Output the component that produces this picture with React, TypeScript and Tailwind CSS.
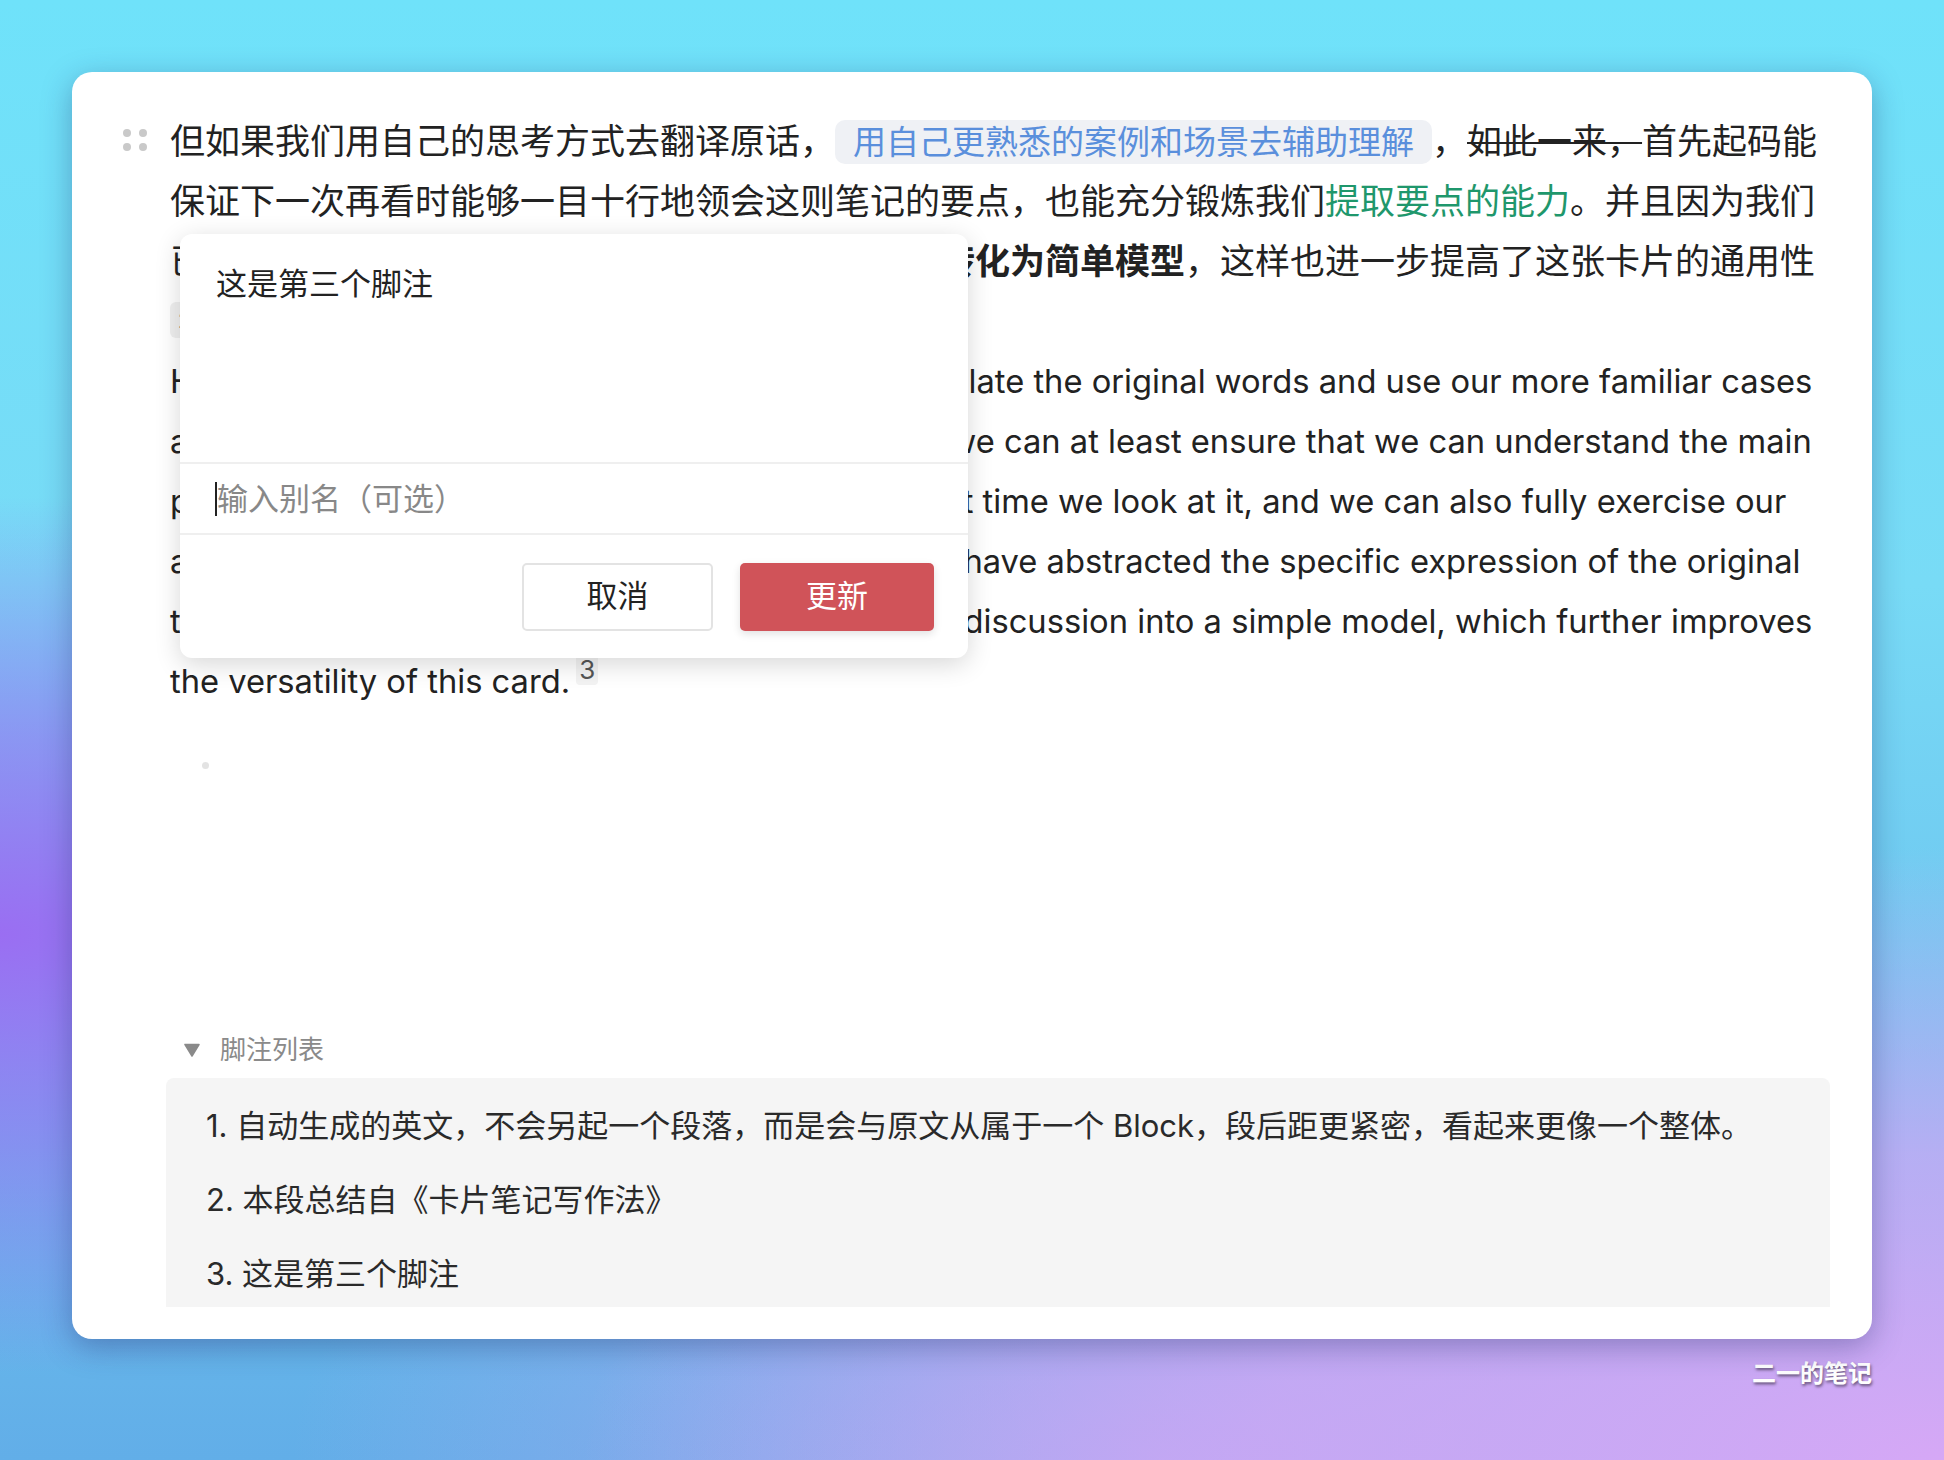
import React from "react";

function DragHandle() {
  return (
    <div className="absolute left-[51px] top-[57px] grid grid-cols-2 gap-x-[8px] gap-y-[6px]">
      <span className="block w-[8px] h-[8px] rounded-full bg-[#c9c9c9]" />
      <span className="block w-[8px] h-[8px] rounded-full bg-[#c9c9c9]" />
      <span className="block w-[8px] h-[8px] rounded-full bg-[#c9c9c9]" />
      <span className="block w-[8px] h-[8px] rounded-full bg-[#c9c9c9]" />
    </div>
  );
}

function FootnoteDialog() {
  return (
    <div className="absolute left-[108px] top-[162px] z-10 flex h-[424px] w-[788px] flex-col overflow-hidden rounded-[12px] bg-white shadow-[0_6px_26px_rgba(0,0,0,0.16)]">
      <div className="h-[228px] px-[36px] pt-[28px] text-[31px] leading-[44px] text-[#222]">这是第三个脚注</div>
      <div className="flex h-[73px] items-center border-y-2 border-[#efefef] pl-[35px]">
        <span className="block h-[34px] w-[2px] bg-[#222]" />
        <span className="text-[31px] leading-[40px] text-[#888888]">输入别名（可选）</span>
      </div>
      <div className="flex flex-1 items-center justify-end gap-[27px] pr-[34px]">
        <button className="h-[68px] w-[191px] rounded-[5px] border-2 border-[#e3e3e3] bg-white text-[31px] text-[#222]">
          取消
        </button>
        <button className="h-[68px] w-[194px] rounded-[5px] bg-[#d05359] text-[31px] text-white shadow-[0_3px_8px_rgba(0,0,0,0.12)]">
          更新
        </button>
      </div>
    </div>
  );
}

const footnotes = [
  "自动生成的英文，不会另起一个段落，而是会与原文从属于一个 Block，段后距更紧密，看起来更像一个整体。",
  "本段总结自《卡片笔记写作法》",
  "这是第三个脚注",
];

export default function App() {
  return (
    <div className="min-h-screen w-full bg-[image:radial-gradient(ellipse_48%_30%_at_0%_64%,rgba(154,110,242,1)_0%,rgba(154,110,242,0.6)_45%,rgba(154,110,242,0)_100%),radial-gradient(ellipse_70%_42%_at_100%_100%,rgba(214,168,246,1)_0%,rgba(214,168,246,0.7)_50%,rgba(214,168,246,0)_100%),radial-gradient(ellipse_45%_30%_at_60%_100%,rgba(172,166,240,0.9)_0%,rgba(172,166,240,0)_100%),linear-gradient(180deg,#6fe2fa_0%,#78dbf6_40%,#62aee8_100%)] pl-[72px] pt-[72px] font-[family-name:Inter,'Noto_Sans_CJK_SC',sans-serif] text-[#222]">
      <div className="relative flex h-[1267px] w-[1800px] flex-col rounded-[20px] bg-white shadow-[0_8px_30px_rgba(30,40,100,0.35)]">
        <DragHandle />
        <FootnoteDialog />

        <div className="pl-[98px] pt-[39px]">
          <p className="whitespace-nowrap text-[35px] leading-[60px]">
            但如果我们用自己的思考方式去翻译原话，
            <span className="inline-block rounded-[10px] bg-[#eff1f5] px-[18px] text-[33px] leading-[44px] text-[#5a8fdc]">
              用自己更熟悉的案例和场景去辅助理解
            </span>
            ，<span className="line-through decoration-[1.5px]">如此一来，</span>首先起码能
            <br />
            保证下一次再看时能够一目十行地领会这则笔记的要点，也能充分锻炼我们
            <span className="text-[#1f976c]">提取要点的能力</span>。并且因为我们
            <br />
            已经把原文的具体表述抽象掉，并<span className="font-bold">将原文中的讨论转化为简单模型</span>
            ，这样也进一步提高了这张卡片的通用性
            <br />
            <span className="inline-block rounded-[6px] bg-[#f0f0f0] px-[8px] align-[6px] text-[22px] leading-[36px] text-[#666]">
              2
            </span>
          </p>
          <p className="whitespace-nowrap text-[32.7px] leading-[60px]">
            However, if we use our own way of thinking to translate the original words and use our more familiar cases
            <br />
            and scenarios to assist in our understanding, then we can at least ensure that we can understand the main
            <br />
            points of this note clearly at a single glance the next time we look at it, and we can also fully exercise our
            <br />
            ability to extract key points. Moreover, because we have abstracted the specific expression of the original
            <br />
            texts and context, and have transformed the whole discussion into a simple model, which further improves
            <br />
            the versatility of this card.
            <span className="ml-[6px] rounded-[4px] bg-[#f3f3f3] px-[3px] align-[14px] text-[26px] leading-none text-[#555]">
              3
            </span>
          </p>
          <div className="ml-[32px] mt-[51px] h-[7px] w-[7px] rounded-full bg-[#e3e3e3]" />
        </div>

        <div className="mb-[32px] ml-[94px] mr-[42px] mt-auto">
          <div className="mb-[10px] flex items-center">
            <svg className="ml-[18px] h-[14px] w-[16px]" viewBox="0 0 16 14">
              <path d="M1 1.5 H15 L8 13 Z" fill="#8a8a8a" stroke="#8a8a8a" strokeWidth="1.5" strokeLinejoin="round" />
            </svg>
            <span className="ml-[20px] text-[26px] leading-[36px] text-[#8a8a8a]">脚注列表</span>
          </div>
          <div className="flex h-[229px] flex-col gap-[30px] overflow-hidden rounded-t-[8px] bg-[#f5f5f5] pl-[40px] pt-[26px] text-[31px] leading-[44px] text-[#2a2a2a]">
            {footnotes.map((text, i) => (
              <div key={i} className="whitespace-nowrap">
                {i + 1}. {text}
              </div>
            ))}
          </div>
        </div>
      </div>

      <div className="mt-[20px] flex w-[1800px] justify-end">
        <span className="text-[24px] font-bold leading-[30px] text-white [text-shadow:1px_2px_3px_rgba(0,0,0,0.5)]">
          二一的笔记
        </span>
      </div>
    </div>
  );
}
